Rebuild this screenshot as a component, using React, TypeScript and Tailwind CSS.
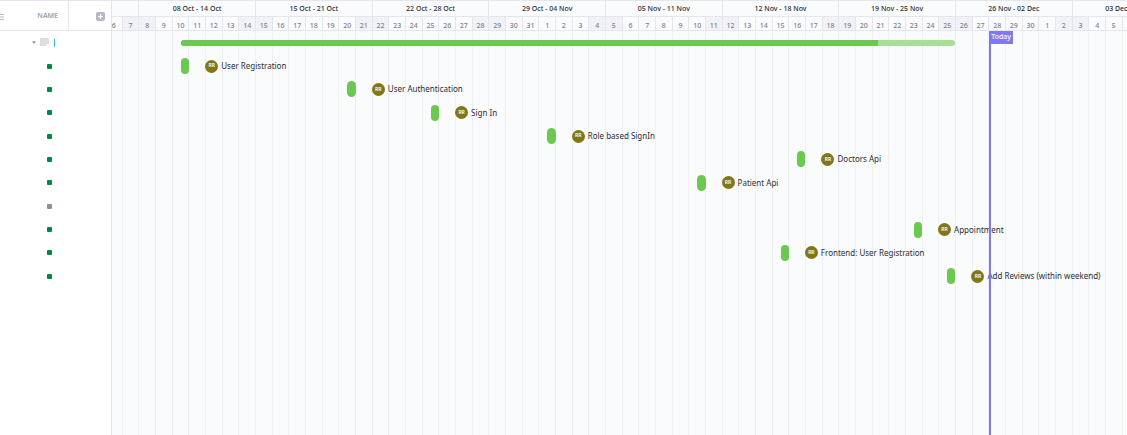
import React from "react";

const DAY_MS = 86400000;
const START = Date.UTC(2023, 9, 6);
const FULL_WEEKS = 11;
const DAYS = 84;
const MONTHS = ["Jan", "Feb", "Mar", "Apr", "May", "Jun", "Jul", "Aug", "Sep", "Oct", "Nov", "Dec"];

type Task = { name: string; start: number | null };

// start is the half-day column in which the task's bar sits
const tasks: Task[] = [
  { name: "User Registration", start: 10 },
  { name: "User Authentication", start: 30 },
  { name: "Sign In", start: 40 },
  { name: "Role based SignIn", start: 54 },
  { name: "Doctors Api", start: 84 },
  { name: "Patient Api", start: 72 },
  { name: "", start: null },
  { name: "Appointment", start: 98 },
  { name: "Frontend: User Registration", start: 82 },
  { name: "Add Reviews (within weekend)", start: 102 },
];

const dateAt = (i: number) => new Date(START + i * DAY_MS);
const isWeekend = (i: number) => [0, 6].includes(dateAt(i).getUTCDay());
const format = (i: number) => {
  const d = dateAt(i);
  return `${String(d.getUTCDate()).padStart(2, "0")} ${MONTHS[d.getUTCMonth()]}`;
};

const days = Array.from({ length: DAYS }, (_, i) => i);
const weeks = Array.from({ length: FULL_WEEKS }, (_, i) => 2 + i * 7);

function Sidebar() {
  return (
    <aside className="flex w-28 shrink-0 flex-col border-r border-[#e4e6ec] bg-white">
      <div className="flex h-[31px] border-y border-[#e4e6ec]">
        <div className="flex w-[69px] items-center justify-between border-r border-[#e4e6ec] pt-0.5 pr-2.5">
          <svg className="h-2 w-1" viewBox="0 0 4 8" aria-hidden="true">
            <path d="M0 1.5h4M0 4h4M0 6.5h4" stroke="#b4b8c4" strokeWidth="1" />
          </svg>
          <span className="text-[7px] font-semibold text-[#9a9fae]">NAME</span>
        </div>
        <div className="flex flex-1 items-center justify-end pt-0.5 pr-1.5">
          <button type="button" aria-label="Add column" className="flex size-[9px] items-center justify-center rounded-xs bg-[#b5bac6]">
            <svg className="size-[9px]" viewBox="0 0 9 9" aria-hidden="true">
              <path d="M4.5 2v5M2 4.5h5" stroke="#fff" strokeWidth="1.2" />
            </svg>
          </button>
        </div>
      </div>
      <div className="grid h-[257px] grid-rows-11">
        <button type="button" aria-label="Collapse list" className="flex items-center gap-1 pl-8">
          <svg className="h-[3px] w-1" viewBox="0 0 4 3" aria-hidden="true">
            <path d="M0 .5h4L2 2.7z" fill="#7c828d" />
          </svg>
          <svg className="mb-0.5 h-2 w-[9px]" viewBox="0 0 9 8" aria-hidden="true">
            <path d="M0 0h9v6H6v2H0z" fill="#dcdee4" />
          </svg>
          <span className="ml-px h-2 w-px bg-[#35b5ff]" />
        </button>
        {tasks.map((t, i) => (
          <div key={i} className="flex items-center pl-[47px]">
            <span className={`size-[5px] rounded-[1px] ${t.start === null ? "bg-[#87909e]" : "bg-[#008844]"}`} />
          </div>
        ))}
      </div>
    </aside>
  );
}

function Timeline() {
  return (
    <main className="min-w-0 flex-1 overflow-x-auto overflow-y-hidden bg-[#fafbfd] [scrollbar-width:none]">
      <div className="relative -ml-[7px] flex min-h-screen w-[1400px] flex-col">
        <div className="grid h-[17px] grid-cols-[repeat(84,1fr)] border-y border-[#e4e6ec]">
          {weeks.map((w) => (
            <div
              key={w}
              className="col-span-7 flex items-center justify-center border-l border-[#e4e6ec] pt-0.5 text-[7px] font-medium text-[#292d34] first:col-start-3"
            >
              {format(w)} - {format(w + 6)}
            </div>
          ))}
        </div>
        <div className="grid h-3.5 grid-cols-[repeat(84,1fr)] border-b border-[#e4e6ec]">
          {days.map((d) => (
            <div
              key={d}
              className={`flex h-[13px] items-center justify-center border-l border-[#e4e6ec] pt-1 text-[7px] leading-[9px] font-medium text-[#7c828d] ${isWeekend(d) ? "bg-[#f1f2f6]" : ""}`}
            >
              {dateAt(d).getUTCDate()}
            </div>
          ))}
        </div>
        <div className="grid flex-1 grid-cols-1">
          <div className="col-start-1 row-start-1 grid grid-cols-[repeat(84,1fr)]">
            {days.map((d) => (
              <div key={d} className="border-l border-[#eff0f4]" />
            ))}
          </div>
          <div className="col-start-1 row-start-1 grid h-[257px] grid-rows-11 pl-px">
            <div className="grid grid-cols-[repeat(168,1fr)] items-center">
              <div className="col-start-10 col-end-103 flex h-1.5 overflow-hidden rounded-full bg-[#a6de96]">
                <div className="w-9/10 bg-[#6bc950]" />
              </div>
            </div>
            {tasks.map((t, i) => (
              <div key={i} className="grid grid-cols-[repeat(168,1fr)] items-center">
                {t.start !== null && (
                  <>
                    <div className="h-4 rounded-full bg-[#6bc950]" style={{ gridColumn: t.start }} />
                    <div
                      className="flex items-center gap-[3px] pl-4"
                      style={{ gridColumn: `${t.start + 1} / span 24` }}
                    >
                      <span className="flex size-[13px] shrink-0 items-center justify-center rounded-full bg-[#827717] text-[5px] font-semibold text-white">
                        RR
                      </span>
                      <span className="text-[8px] whitespace-nowrap text-[#292d34]">{t.name}</span>
                    </div>
                  </>
                )}
              </div>
            ))}
          </div>
        </div>
        <div className="absolute top-[31px] bottom-0 left-[884px] border-l-2 border-[#8177f0]">
          <span className="flex h-[13px] w-[22px] items-center justify-end bg-[#8177f0] pr-0.5 text-[7px] font-medium text-white">
            Today
          </span>
        </div>
      </div>
    </main>
  );
}

export default function App() {
  return (
    <div className="flex min-h-screen w-full bg-white font-['Noto_Sans','Open_Sans',sans-serif]">
      <Sidebar />
      <Timeline />
    </div>
  );
}
